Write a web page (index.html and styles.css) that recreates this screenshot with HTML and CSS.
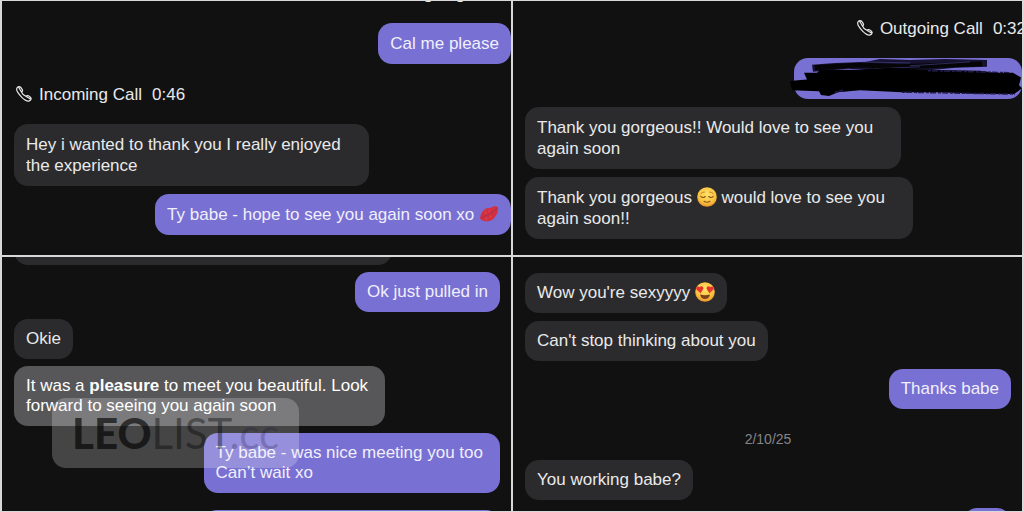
FILE: index.html
```html
<!DOCTYPE html>
<html lang="en">
<head>
<meta charset="utf-8">
<title>Messages</title>
<link rel="stylesheet" href="styles.css">
</head>
<body>
<svg class="defs" aria-hidden="true">
  <symbol id="phone" viewBox="0 0 16 16">
    <path d="M1.200 1.700 C2.300 .3 4 .4 4.900 1.600 L6.300 3.700 C7 4.900 6.300 5.600 5.600 6.200 C6.300 7.900 8 9.500 9.800 10.300 C10.600 9.600 11.300 9.100 12.400 9.800 L14.400 11.200 C15.500 12.200 15.300 13.300 14.300 14.300 C12.500 15.900 9 14.500 5.600 11.100 C2 7.500 -.3 3.700 1.200 1.700 Z M2.600 1.200 L5.600 6.200 M9.800 10.300 L14.800 13.200" fill="none" stroke="currentColor" stroke-width="1.200" stroke-linejoin="round"/>
  </symbol>
</svg>
<main class="collage">
  <section class="panel panel--tall panel--call-cut">
    <div class="call call--out"><svg class="call-icon"><use href="#phone"/></svg><span>Outgoing Call</span></div>
    <p class="bubble bubble--sent">Cal me please</p>
    <div class="call"><svg class="call-icon"><use href="#phone"/></svg><span>Incoming Call</span><span class="call-time">0:46</span></div>
    <p class="bubble bubble--wrapped">Hey i wanted to thank you I really enjoyed<br>the experience</p>
    <p class="bubble bubble--sent">Ty babe - hope to see you again soon xo
      <svg class="emoji" viewBox="0 0 20 20" role="img" aria-label="kiss mark">
        <path d="M1 14.500 C1.500 10 4 5.500 8 4.300 C9.500 3.900 10.500 4.200 11.500 4 C13.500 2.200 17 1.600 19 3 C19.600 7 17.500 12.500 13.500 15.500 C9.500 18.200 4.500 18 1 14.500 Z" fill="#d2303f"/>
        <path d="M2.500 13.800 C6 11.500 8.500 11.800 11 9.500 C13 8.300 15 7 17.800 4.600" fill="none" stroke="#9c3058" stroke-width=".9"/>
        <path d="M6 7.500 L7 10 M10 5.500 L10.500 8.500 M7 13.500 L7.500 16 M11 11.500 L12 14" stroke="#e4505c" stroke-width=".7"/>
      </svg></p>
  </section>

  <section class="panel panel--tall panel--call">
    <div class="call call--cropped"><svg class="call-icon"><use href="#phone"/></svg><span>Outgoing Call</span><span class="call-time">0:32</span></div>
    <div class="bubble bubble--sent bubble--redacted" aria-label="Redacted message">
      <svg class="scribble" viewBox="0 0 232 42" preserveAspectRatio="none" aria-hidden="true">
        <path d="M22 7 L45 5 L75 4 L90 1 L120 2 L155 1 L197 2 L197 9 L165 10 L135 13 L90 13 L58 11 L23 14 Z" fill="#16122f"/>
        <path d="M25 10 L70 7 L110 9 L192 6" fill="none" stroke="#050507" stroke-width="5"/>
        <path d="M72 4 L120 5 M85 11 L130 9 M120 8 L180 4" stroke="#4a4590" stroke-width=".6"/>
        <path d="M0 24 L5 23 L17 22 L14 15 L27 15 L30 12 L68 12 L100 10 L132 12 L190 13 L205 15 L223 15 L231 20 L229 28 L232 31 L224 37 L190 37 L150 35 L112 35 L70 33 L48 35 L39 39 L31 38 L29 34 L2 33 Z" fill="#000"/>
        <path d="M45 35 L53 33 M112 35 L225 37 M138 13 L219 15" fill="none" stroke="#211b48" stroke-width="1.500" stroke-dasharray="3 1 6 2"/>
      </svg>
    </div>
    <p class="bubble bubble--wrapped">Thank you gorgeous!! Would love to see you<br>again soon</p>
    <p class="bubble bubble--wrapped">Thank you gorgeous
      <svg class="emoji" viewBox="0 0 20 20" role="img" aria-label="relieved face">
        <defs><radialGradient id="face" cx=".5" cy=".35" r=".65"><stop offset="0" stop-color="#ffe269"/><stop offset=".7" stop-color="#fbc13d"/><stop offset="1" stop-color="#e8932c"/></radialGradient></defs>
        <circle cx="10" cy="10" r="9.800" fill="url(#face)"/>
        <path d="M3.800 9.300 Q6 11.500 8.300 9.500 M11.700 9.500 Q14 11.500 16.200 9.300 M7 14.300 Q10 16.300 13 14.300" fill="none" stroke="#80501d" stroke-width="1.100" stroke-linecap="round"/>
        <path d="M4 6.500 Q5.500 4.800 7.500 5 M12.500 5 Q14.500 4.800 16 6.500" fill="none" stroke="#b87925" stroke-width=".9" stroke-linecap="round"/>
      </svg> would love to see you<br>again soon!!</p>
  </section>

  <section class="panel panel--inset panel--compact panel--bubble-cut">
    <div class="bubble bubble--stub"></div>
    <p class="bubble bubble--sent">Ok just pulled in</p>
    <p class="bubble">Okie</p>
    <p class="bubble bubble--wrapped bubble--active">It was a <b>pleasure</b> to meet you beautiful. Look<br>forward to seeing you again soon</p>
    <p class="bubble bubble--sent bubble--wrapped">Ty babe - was nice meeting you too<br>Can’t wait xo</p>
    <div class="bubble bubble--sent bubble--next"></div>
    <div class="watermark"><b>LEO</b><span class="watermark-light">LIST</span><span class="watermark-faint">.cc</span></div>
  </section>

  <section class="panel panel--inset panel--dated">
    <p class="bubble">Wow you're sexyyyy
      <svg class="emoji" viewBox="0 0 20 20" role="img" aria-label="heart eyes">
        <circle cx="10" cy="10" r="9.800" fill="url(#face)"/>
        <path d="M5.500 11.200 L1.500 7.500 C.2 5.200 3 3.500 4.700 5.200 C6 3.300 9 4.500 8.300 7 Z M14.500 11.200 L11.700 7 C11 4.500 14 3.300 15.300 5.200 C17 3.500 19.800 5.200 18.500 7.500 Z" fill="#e5342d"/>
        <path d="M5 12.500 Q10 14 15 12.500 Q14 17 10 17 Q6 17 5 12.500 Z" fill="#7d411b"/>
      </svg></p>
    <p class="bubble">Can't stop thinking about you</p>
    <p class="bubble bubble--sent">Thanks babe</p>
    <time class="date" datetime="2025-02-10">2/10/25</time>
    <p class="bubble">You working babe?</p>
    <div class="bubble bubble--sent bubble--short"></div>
  </section>
</main>
</body>
</html>
```
FILE: styles.css
```css
* {
  box-sizing: border-box;
}

body {
  margin: 0;
  background: #d9d9d9;
  color: #e9e9ea;
  font-family: "Liberation Sans", Arial, sans-serif;
  font-size: 17px;
  line-height: 21px;
}

.defs {
  display: none;
}

.collage {
  display: grid;
  grid-template-columns: 1fr 1fr;
  grid-template-rows: 1fr 1fr;
  gap: 2px;
  height: 100vh;
  padding: 1px 2px;
}

.panel {
  position: relative;
  display: flex;
  flex-direction: column;
  align-items: flex-start;
  gap: 8px;
  min-width: 0;
  min-height: 0;
  overflow: hidden;
  padding-left: 12px;
  background: #111112;
}

.panel > * {
  flex: none;
}

.panel--inset {
  padding-right: 11px;
  line-height: 20px;
}

.panel--compact {
  gap: 7px;
}

.panel--call {
  padding-top: 5px;
}

.panel--dated {
  padding-top: 16px;
}

.panel--call-cut > :first-child {
  margin-top: -30px;
}

.panel--bubble-cut > :first-child {
  margin-top: -32px;
}

.bubble {
  margin: 0;
  padding: 10px 12px;
  border-radius: 14px;
  background: #2b2b2d;
  white-space: nowrap;
}

.bubble--sent {
  align-self: flex-end;
  background: #7870d2;
  color: #f0effb;
}

.bubble--wrapped {
  padding-right: 17px;
}

.panel--tall .bubble--wrapped {
  padding-right: 28px;
}

.bubble--active {
  background: #575759;
  color: #fff;
}

.bubble--stub {
  width: 378px;
  height: 40px;
}

.bubble--next {
  width: 297px;
  height: 40px;
  margin-top: 10px;
}

.bubble--short {
  width: 48px;
  height: 40px;
}

.bubble--redacted {
  position: relative;
  width: 228px;
  height: 41px;
}

.scribble {
  position: absolute;
  top: 0;
  left: -4px;
  width: 232px;
  height: 41px;
}

.call {
  display: flex;
  align-items: center;
  gap: 7px;
  height: 44px;
  padding-left: 2px;
  white-space: nowrap;
}

.call-time {
  padding-left: 3px;
}

.call--out {
  align-self: flex-end;
  margin-right: 12px;
}

.call--cropped {
  align-self: flex-end;
  margin-right: -4px;
}

.call-icon {
  width: 16px;
  height: 16px;
}

.emoji {
  width: 20px;
  height: 20px;
  margin: -2px 0;
  vertical-align: -2px;
}

.date {
  align-self: center;
  padding-top: 10px;
  color: #858587;
  font-size: 14px;
  line-height: 25px;
}

.watermark {
  position: absolute;
  top: 141px;
  left: 50px;
  padding: 10px 20px;
  border-radius: 14px;
  background: rgba(255, 255, 255, 0.22);
  color: rgba(0, 0, 0, 0.65);
  font-family: Lato, sans-serif;
  font-size: 42px;
  line-height: 50px;
}

.watermark b {
  font-weight: 900;
}

.watermark-light {
  color: rgba(0, 0, 0, 0.4);
}

.watermark-faint {
  color: rgba(30, 20, 60, 0.25);
}
```
